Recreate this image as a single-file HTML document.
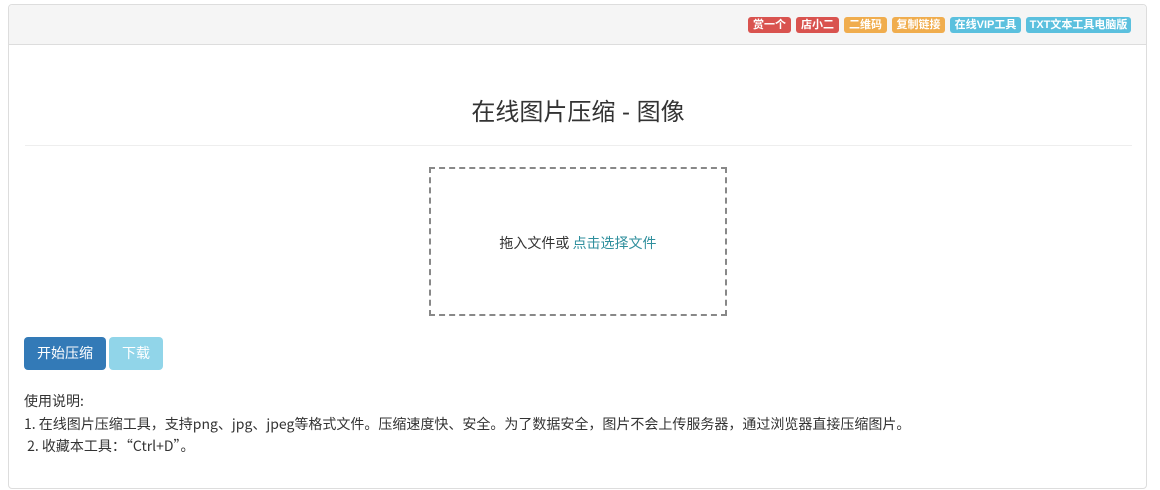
<!DOCTYPE html>
<html><head><meta charset="utf-8"><style>
body{margin:0;background:#fff;font-family:"Liberation Sans","Noto Sans CJK SC",sans-serif;color:#333;font-size:13px}
.panel{position:absolute;left:8px;top:4px;width:1139px;height:485px;border:1px solid #ddd;border-radius:4px;box-sizing:border-box}
.hd{height:39px;background:#f5f5f5;border-bottom:1px solid #ddd;border-radius:4px 4px 0 0;position:relative}
.b{position:absolute;top:12px;height:16px;line-height:16px;color:#fff;font-size:11px;font-weight:bold;text-align:center;border-radius:3px;white-space:nowrap}
.r{background:#d9534f}.o{background:#f0ad4e}.c{background:#5bc0de}
h1{position:absolute;left:0;width:1138px;top:88px;margin:0;font-weight:normal;font-size:24px;text-align:center;line-height:40px}
.hr{position:absolute;left:16px;width:1107px;top:140px;border-top:1px solid #eee}
.cjk{font-family:"Noto Sans CJK SC","Liberation Sans",sans-serif;font-size:14px}
.drop{position:absolute;left:420px;top:162px;width:298px;height:149px;border:2px dashed #888;box-sizing:border-box;text-align:center;line-height:148px}
.drop span{color:#2f8f9d}
.btn{position:absolute;top:332px;height:33px;line-height:33px;color:#fff;border-radius:4px;text-align:center}
.txt{position:absolute;left:15px;top:385px;line-height:22.5px;white-space:nowrap}
</style></head><body>
<div class="panel">
<div class="hd">
<div class="b r" style="left:739px;width:43px">赏一个</div>
<div class="b r" style="left:787px;width:43px">店小二</div>
<div class="b o" style="left:835px;width:43px">二维码</div>
<div class="b o" style="left:883px;width:53px">复制链接</div>
<div class="b c" style="left:941px;width:71px">在线VIP工具</div>
<div class="b c" style="left:1017px;width:105px">TXT文本工具电脑版</div>
</div>
<h1>在线图片压缩 - 图像</h1>
<div class="hr"></div>
<div class="drop cjk">拖入文件或 <span>点击选择文件</span></div>
<div class="btn cjk" style="left:15px;width:82px;background:#337ab7">开始压缩</div>
<div class="btn cjk" style="left:100px;width:54px;background:#91d5e9">下载</div>
<div class="txt cjk">使用说明:<br>1. 在线图片压缩工具，支持png、jpg、jpeg等格式文件。压缩速度快、安全。为了数据安全，图片不会上传服务器，通过浏览器直接压缩图片。<br>&nbsp;2. 收藏本工具：“Ctrl+D”。</div>
</div>
</body></html>
